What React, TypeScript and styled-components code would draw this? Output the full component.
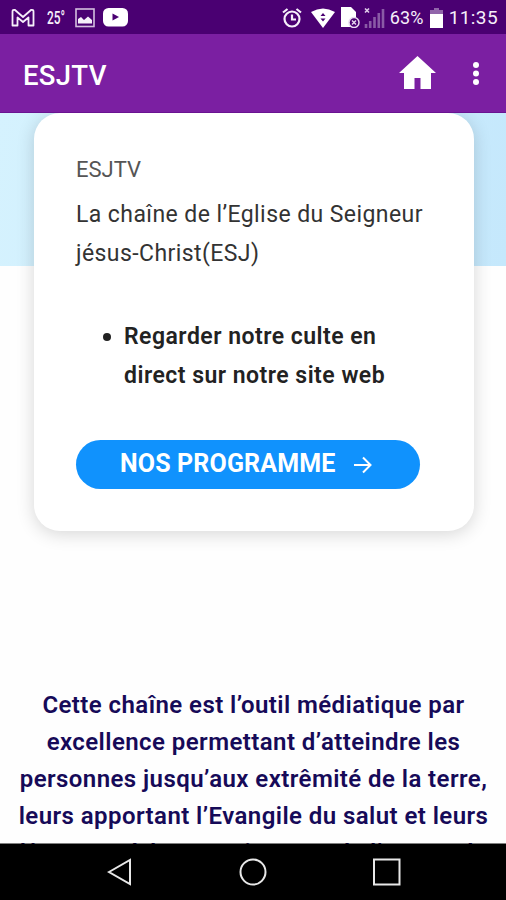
import React from 'react';
import styled, { createGlobalStyle } from 'styled-components';

const GlobalStyle = createGlobalStyle`
  * { box-sizing: border-box; }
  body { margin: 0; background: #fff; font-family: Roboto, "Liberation Sans", sans-serif; }
`;

const Screen = styled.div`
  width: 506px;
  height: 900px;
  display: flex;
  flex-direction: column;
  overflow: hidden;
  background: #fefefe;
`;

const StatusBar = styled.header`
  height: 34px;
  flex: none;
  display: flex;
  justify-content: space-between;
  padding: 0 8px 0 11px;
  background: #4a0072;
  color: #f6effa;
`;

const StatusGroup = styled.div`
  display: flex;
  align-items: center;
  height: 35px;
`;

const StatusText = styled.span<{ $size: number; $spacing?: number; $left: number }>`
  font-size: ${p => p.$size}px;
  letter-spacing: ${p => p.$spacing ?? 0}px;
  margin-left: ${p => p.$left}px;
  line-height: 37px;
  white-space: nowrap;
`;

const Temperature = styled.span`
  margin-left: 12px;
  width: 20px;
  font: 500 18px/34px Roboto, sans-serif;
  white-space: nowrap;
  transform: scaleX(0.66);
  transform-origin: left center;
`;

const Glyph = styled.svg<{ $left?: number }>`
  flex: none;
  display: block;
  margin-left: ${p => p.$left ?? 0}px;
`;

const AppBar = styled.nav`
  height: 79px;
  flex: none;
  display: flex;
  align-items: center;
  padding: 0 26px 0 23px;
  background: #7b1fa2;
  border-bottom: 1px solid #6a1391;
`;

const AppTitle = styled.h1`
  flex: 1;
  margin: 5px 0 0;
  color: #fff;
  font-size: 27.5px;
  font-weight: 500;
  line-height: 32px;
  letter-spacing: 0.3px;
`;

const Content = styled.main`
  flex: 1;
  min-height: 0;
  overflow: hidden;
  background: linear-gradient(100deg, #d5f2fe, #c5e8fc) 0 0 / 100% 153px no-repeat;
`;

const Card = styled.section`
  width: 440px;
  height: 418px;
  margin-left: 34px;
  padding: 43px 0 0 42px;
  border-radius: 26px;
  background: #fff;
  color: #333;
  box-shadow: 0 3px 18px rgba(0, 0, 0, 0.16);
`;

const CardLabel = styled.p`
  margin: 0;
  font-size: 22px;
  line-height: 28px;
  color: #555;
`;

const CardText = styled.p`
  margin: 12px 0 0;
  font-size: 23px;
  line-height: 38.5px;
  letter-spacing: 0.42px;
`;

const CardList = styled.ul`
  margin: 45px 0 0;
  padding: 0;
  list-style: none;
`;

const CardItem = styled.li`
  display: flex;
  padding-left: 27px;
  color: #222;
  font-size: 23px;
  font-weight: 600;
  line-height: 38.5px;
  letter-spacing: 0.48px;
`;

const Bullet = styled.span`
  flex: none;
  width: 8px;
  height: 8px;
  margin: 15px 13px 0 0;
  border-radius: 50%;
  background: #222;
`;

const ProgrammeButton = styled.button`
  display: flex;
  align-items: center;
  width: 344px;
  height: 49px;
  margin-top: 45px;
  padding: 0 0 0 44px;
  border: 0;
  border-radius: 25px;
  background: #1092fd;
  color: #fff;
  font: 700 25px/48px Roboto, sans-serif;
  letter-spacing: 0.15px;
  text-align: left;
  white-space: nowrap;
`;

const ButtonLabel = styled.span`
  width: 234px;
  height: 49px;
`;

const Mission = styled.p`
  margin: 156px 0 0;
  color: #160a58;
  font-size: 24px;
  font-weight: 600;
  line-height: 37px;
  letter-spacing: 0.43px;
  text-align: center;
`;

const MissionLine = styled.span`
  display: block;
  margin-left: 1px;
  white-space: nowrap;
`;

const SystemBar = styled.footer`
  position: relative;
  height: 57px;
  margin-top: -1px;
  flex: none;
  display: flex;
  align-items: center;
  padding-left: 107px;
  border-top: 1px solid rgba(0, 0, 0, 0.5);
  background: #000 padding-box;
`;

export default function App() {
  return (
    <Screen>
      <GlobalStyle />
      <StatusBar>
        <StatusGroup>
          <Glyph width="24" height="20" viewBox="0 0 24 20" fill="none" stroke="currentColor" strokeWidth="1.8" strokeLinejoin="round">
            <path d="M1.5 3.5Q1.5 1.5 4 2L12 9 20 2Q22.5 1.5 22.5 3.5V17.5H17.5V9.5L12 14 6.5 9.5V17.5H1.5Z" />
          </Glyph>
          <Temperature>25°</Temperature>
          <Glyph $left={8} width="20" height="20" viewBox="0 0 20 20">
            <rect x="1" y="1" width="18" height="17.5" fill="none" stroke="currentColor" strokeWidth="1.6" opacity=".8" />
            <path d="M3 15.5V11L6 9 9 12 13 8.5 17 12V15.5Z" fill="currentColor" />
          </Glyph>
          <Glyph $left={8} width="25" height="19" viewBox="0 0 25 19">
            <rect width="25" height="18.5" rx="5.5" fill="#fff" />
            <path d="M9.5 5.5V12.5L16 9Z" fill="#4a0072" />
          </Glyph>
        </StatusGroup>
        <StatusGroup>
          <Glyph width="20" height="22" viewBox="0 0 20 22" fill="none" stroke="currentColor" strokeWidth="2.2">
            <circle cx="10" cy="12" r="7.5" />
            <path d="M10 7.5V12.5H14M1 5.5 5.5 2M14.5 2 19 5.5" />
          </Glyph>
          <Glyph $left={9} width="24" height="20" viewBox="0 0 24 20">
            <path d="M0 4Q12-3 24 4L12 20Z" fill="#fff" />
            <path d="M9.5 8 12 5 14.500 8ZM9.500 10.500H14.500L12 13.500Z" fill="#4a0072" />
          </Glyph>
          <Glyph $left={6} width="19" height="21" viewBox="0 0 19 21">
            <path d="M0 0H10L15 5V20H0Z" fill="#fff" />
            <circle cx="13" cy="15.5" r="5" fill="#4a0072" stroke="#e9d9f0" strokeWidth="1.5" />
            <path d="M11 13.5 15 17.5M15 13.5 11 17.5" stroke="#e9d9f0" strokeWidth="1.4" />
          </Glyph>
          <Glyph $left={4} width="21" height="22" viewBox="0 0 21 22">
            <path d="M1 1.5 5 5.5M5 1.5 1 5.5" stroke="#e0cdea" strokeWidth="1.6" />
            <path d="M2 17V21M6.2 14V21M10.5 10V21M14.8 6V21M19 2V21" stroke="#8a5aa6" strokeWidth="2.6" />
          </Glyph>
          <StatusText $left={5} $size={18} $spacing={0.2}>63%</StatusText>
          <Glyph $left={6} width="13" height="20" viewBox="0 0 13 20">
            <path d="M4 0H9V2H13V7H0V2H4Z" fill="#9165aa" />
            <path d="M0 6H13V20H0Z" fill="#fff" />
          </Glyph>
          <StatusText $left={6} $size={19} $spacing={0.4}>11:35</StatusText>
        </StatusGroup>
      </StatusBar>

      <AppBar>
        <AppTitle>ESJTV</AppTitle>
        <Glyph width="37" height="34" viewBox="0 0 37 34">
          <path d="M18.500 0 37 17H32V33H21.500V22H15.500V33H5V17H0Z" fill="#fff" />
        </Glyph>
        <Glyph $left={37} width="7" height="26" viewBox="0 0 7 26" fill="#fff">
          <circle cx="3" cy="5" r="3" />
          <circle cx="3" cy="13.500" r="3" />
          <circle cx="3" cy="22" r="3" />
        </Glyph>
      </AppBar>

      <Content>
        <Card>
          <CardLabel>ESJTV</CardLabel>
          <CardText>La chaîne de l’Eglise du Seigneur<br />jésus-Christ(ESJ)</CardText>
          <CardList>
            <CardItem><Bullet /><span>Regarder notre culte en<br />direct sur notre site web</span></CardItem>
          </CardList>
          <ProgrammeButton>
            <ButtonLabel>NOS PROGRAMME</ButtonLabel>
            <Glyph width="18" height="18" viewBox="0 0 18 18" fill="none" stroke="#fff" strokeWidth="2">
              <path d="M0 9H16M9 1.500 16.500 9 9 16.500" />
            </Glyph>
          </ProgrammeButton>
        </Card>
        <Mission>
          <MissionLine>Cette chaîne est l’outil médiatique par</MissionLine>
          <MissionLine>excellence permettant d’atteindre les</MissionLine>
          <MissionLine>personnes jusqu’aux extrêmité de la terre,</MissionLine>
          <MissionLine>leurs apportant l’Evangile du salut et leurs</MissionLine>
          <MissionLine>lâmenant à la connaissance de l’amour de</MissionLine>
        </Mission>
      </Content>

      <SystemBar>
        <Glyph width="25" height="28" viewBox="0 0 25 28" fill="none" stroke="#e8e8e8" strokeWidth="2">
          <path d="M2 14 23 2V26Z" />
        </Glyph>
        <Glyph $left={107} width="28" height="28" viewBox="0 0 28 28" fill="none" stroke="#e8e8e8" strokeWidth="2">
          <circle cx="14" cy="14" r="12.500" />
        </Glyph>
        <Glyph $left={106} width="28" height="28" viewBox="0 0 28 28" fill="none" stroke="#e8e8e8" strokeWidth="2">
          <rect x="1" y="1.500" width="25.500" height="25" />
        </Glyph>
      </SystemBar>
    </Screen>
  );
}
